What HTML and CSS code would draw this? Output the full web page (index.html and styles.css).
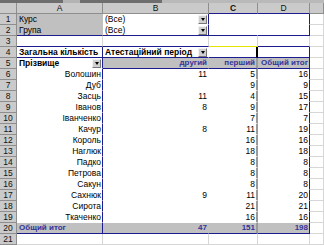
FILE: index.html
```html
<!DOCTYPE html>
<html lang="uk">
<head>
    <meta charset="UTF-8">
    <meta name="viewport" content="width=device-width, initial-scale=1.0">
    <title>Зведена таблиця</title>
    <link rel="stylesheet" href="styles.css">
</head>
<body>
    <div class="topbar">
        <span class="bar-dark"></span>
        <span class="bar-tab"></span>
        <span class="bar-dark bar-mid"></span>
        <span class="bar-light"></span>
    </div>

    <div class="sheet">
        <!-- column headers -->
        <div class="hd corner"></div>
        <div class="hd">A</div>
        <div class="hd">B</div>
        <div class="hd hd-on nb">C</div>
        <div class="hd nb">D</div>
        <div class="hd"></div>

        <!-- 1 -->
        <div class="rn">1</div>
        <div class="c gray">Курс</div>
        <div class="c pv dd nr">(Все)<span class="btn"></span></div>
        <div class="c pv"></div>
        <div class="c pv nr"></div>
        <div class="c"></div>

        <!-- 2 -->
        <div class="rn">2</div>
        <div class="c gray nb">Група</div>
        <div class="c pv dd nr nb">(Все)<span class="btn"></span></div>
        <div class="c pv nb"></div>
        <div class="c pv nr nb"></div>
        <div class="c"></div>

        <!-- 3 -->
        <div class="rn">3</div>
        <div class="c nb"></div>
        <div class="c nb"></div>
        <div class="c yb"></div>
        <div class="c nb"></div>
        <div class="c"></div>

        <!-- 4 -->
        <div class="rn">4</div>
        <div class="c pv b nr nb">Загальна кількість</div>
        <div class="c pv b dd nb">Атестаційний період<span class="btn"></span></div>
        <div class="c pv cur nb"></div>
        <div class="c pv nr nb"></div>
        <div class="c"></div>

        <!-- 5 -->
        <div class="rn">5</div>
        <div class="c pv b dd nr">Прізвище<span class="btn"></span></div>
        <div class="c gray th r nb">другий</div>
        <div class="c gray th r sep nb">перший</div>
        <div class="c gray th r nr nb">Общий итог</div>
        <div class="c"></div>

        <!-- 6 -->
        <div class="rn">6</div>
        <div class="c pv r nr">Волошин</div>
        <div class="c pv r">11</div>
        <div class="c pv r sep">5</div>
        <div class="c pv r nr">16</div>
        <div class="c"></div>

        <!-- 7 -->
        <div class="rn">7</div>
        <div class="c pv r nr">Дуб</div>
        <div class="c pv r"></div>
        <div class="c pv r sep">9</div>
        <div class="c pv r nr">9</div>
        <div class="c"></div>

        <!-- 8 -->
        <div class="rn">8</div>
        <div class="c pv r nr">Засць</div>
        <div class="c pv r">11</div>
        <div class="c pv r sep">4</div>
        <div class="c pv r nr">15</div>
        <div class="c"></div>

        <!-- 9 -->
        <div class="rn">9</div>
        <div class="c pv r nr">Іванов</div>
        <div class="c pv r">8</div>
        <div class="c pv r sep">9</div>
        <div class="c pv r nr">17</div>
        <div class="c"></div>

        <!-- 10 -->
        <div class="rn">10</div>
        <div class="c pv r nr">Іванченко</div>
        <div class="c pv r"></div>
        <div class="c pv r sep">7</div>
        <div class="c pv r nr">7</div>
        <div class="c"></div>

        <!-- 11 -->
        <div class="rn">11</div>
        <div class="c pv r nr">Качур</div>
        <div class="c pv r">8</div>
        <div class="c pv r sep">11</div>
        <div class="c pv r nr">19</div>
        <div class="c"></div>

        <!-- 12 -->
        <div class="rn">12</div>
        <div class="c pv r nr">Король</div>
        <div class="c pv r"></div>
        <div class="c pv r sep">16</div>
        <div class="c pv r nr">16</div>
        <div class="c"></div>

        <!-- 13 -->
        <div class="rn">13</div>
        <div class="c pv r nr">Наглюк</div>
        <div class="c pv r"></div>
        <div class="c pv r sep">18</div>
        <div class="c pv r nr">18</div>
        <div class="c"></div>

        <!-- 14 -->
        <div class="rn">14</div>
        <div class="c pv r nr">Падко</div>
        <div class="c pv r"></div>
        <div class="c pv r sep">8</div>
        <div class="c pv r nr">8</div>
        <div class="c"></div>

        <!-- 15 -->
        <div class="rn">15</div>
        <div class="c pv r nr">Петрова</div>
        <div class="c pv r"></div>
        <div class="c pv r sep">8</div>
        <div class="c pv r nr">8</div>
        <div class="c"></div>

        <!-- 16 -->
        <div class="rn">16</div>
        <div class="c pv r nr">Сакун</div>
        <div class="c pv r"></div>
        <div class="c pv r sep">8</div>
        <div class="c pv r nr">8</div>
        <div class="c"></div>

        <!-- 17 -->
        <div class="rn">17</div>
        <div class="c pv r nr">Сахнюк</div>
        <div class="c pv r">9</div>
        <div class="c pv r sep">11</div>
        <div class="c pv r nr">20</div>
        <div class="c"></div>

        <!-- 18 -->
        <div class="rn">18</div>
        <div class="c pv r nr">Сирота</div>
        <div class="c pv r"></div>
        <div class="c pv r sep">21</div>
        <div class="c pv r nr">21</div>
        <div class="c"></div>

        <!-- 19 -->
        <div class="rn">19</div>
        <div class="c pv r nr">Ткаченко</div>
        <div class="c pv r"></div>
        <div class="c pv r sep">16</div>
        <div class="c pv r nr">16</div>
        <div class="c"></div>

        <!-- 20: totals -->
        <div class="rn">20</div>
        <div class="c gray th nr nb">Общий итог</div>
        <div class="c gray th r nb">47</div>
        <div class="c gray th r sep nb">151</div>
        <div class="c gray th r nr nb">198</div>
        <div class="c"></div>

        <!-- 21 -->
        <div class="rn">21</div>
        <div class="c"></div>
        <div class="c"></div>
        <div class="c"></div>
        <div class="c"></div>
        <div class="c"></div>
    </div>
</body>
</html>
```

FILE: styles.css
```css
*{
    margin: 0;
    padding: 0;
    box-sizing: border-box;
}

body{
    background-color: white;
    font-family: "Liberation Sans", Arial, sans-serif;
    font-size: 8.5px;
    color: black;
    overflow: hidden;
}

.topbar{
    display: flex;
    height: 3px;
}
.bar-dark{
    width: 63px;
    background-color: #6e6e6e;
}
.bar-tab{
    width: 17px;
    background-color: #b4b4b4;
}
.bar-mid{
    width: 82px;
}
.bar-light{
    flex: 1;
    background-color: #b9b9b9;
}

.sheet{
    display: grid;
    grid-template-columns: 17px 86px 106px 49px 52px 1fr;
    grid-auto-rows: 11px;
}

/* column letters and row numbers */
.hd, .rn{
    background-color: #cacaca;
    border-right: 1px solid #8e8e8e;
    border-bottom: 1px solid #8e8e8e;
    text-align: center;
    line-height: 10px;
    color: #111;
}
.hd-on{
    font-weight: bold;
}

/* ordinary cell with light gridlines */
.c{
    border-right: 1px solid #d6d6d6;
    border-bottom: 1px solid #d6d6d6;
    padding: 0 2px;
    line-height: 10px;
    white-space: nowrap;
    overflow: hidden;
}

/* pivot cells: white fill hides gridlines */
.pv{
    border-right-color: transparent;
    border-bottom-color: transparent;
}

.gray{
    background-color: #c0c0c0;
    border-right-color: #c0c0c0;
    border-bottom-color: #c0c0c0;
}

.r{
    text-align: right;
    padding-right: 1px;
}
.b{
    font-weight: bold;
}
.th{
    font-weight: bold;
    font-size: 8px;
    color: #34349a;
}

.sep{
    border-right: 2px solid #9a9a9a;
}
.cur{
    border-right: 2px solid black;
}

.nr{
    border-right: 1px solid #1c1c8e;
}
.nb{
    border-bottom-color: #1c1c8e;
}
.yb{
    border-bottom-color: #e4e400;
}

/* field with a drop-down button at its right edge */
.dd{
    display: flex;
    align-items: center;
    justify-content: space-between;
    padding-right: 1px;
}
.btn{
    flex: none;
    width: 9px;
    height: 9px;
    background-color: #d0d0d0;
    border-top: 1px solid #f2f2f2;
    border-left: 1px solid #f2f2f2;
    border-right: 1px solid #777;
    border-bottom: 1px solid #777;
    display: flex;
    justify-content: center;
    align-items: center;
}
.btn::after{
    content: "";
    border-left: 2.5px solid transparent;
    border-right: 2.5px solid transparent;
    border-top: 3px solid black;
}
```
